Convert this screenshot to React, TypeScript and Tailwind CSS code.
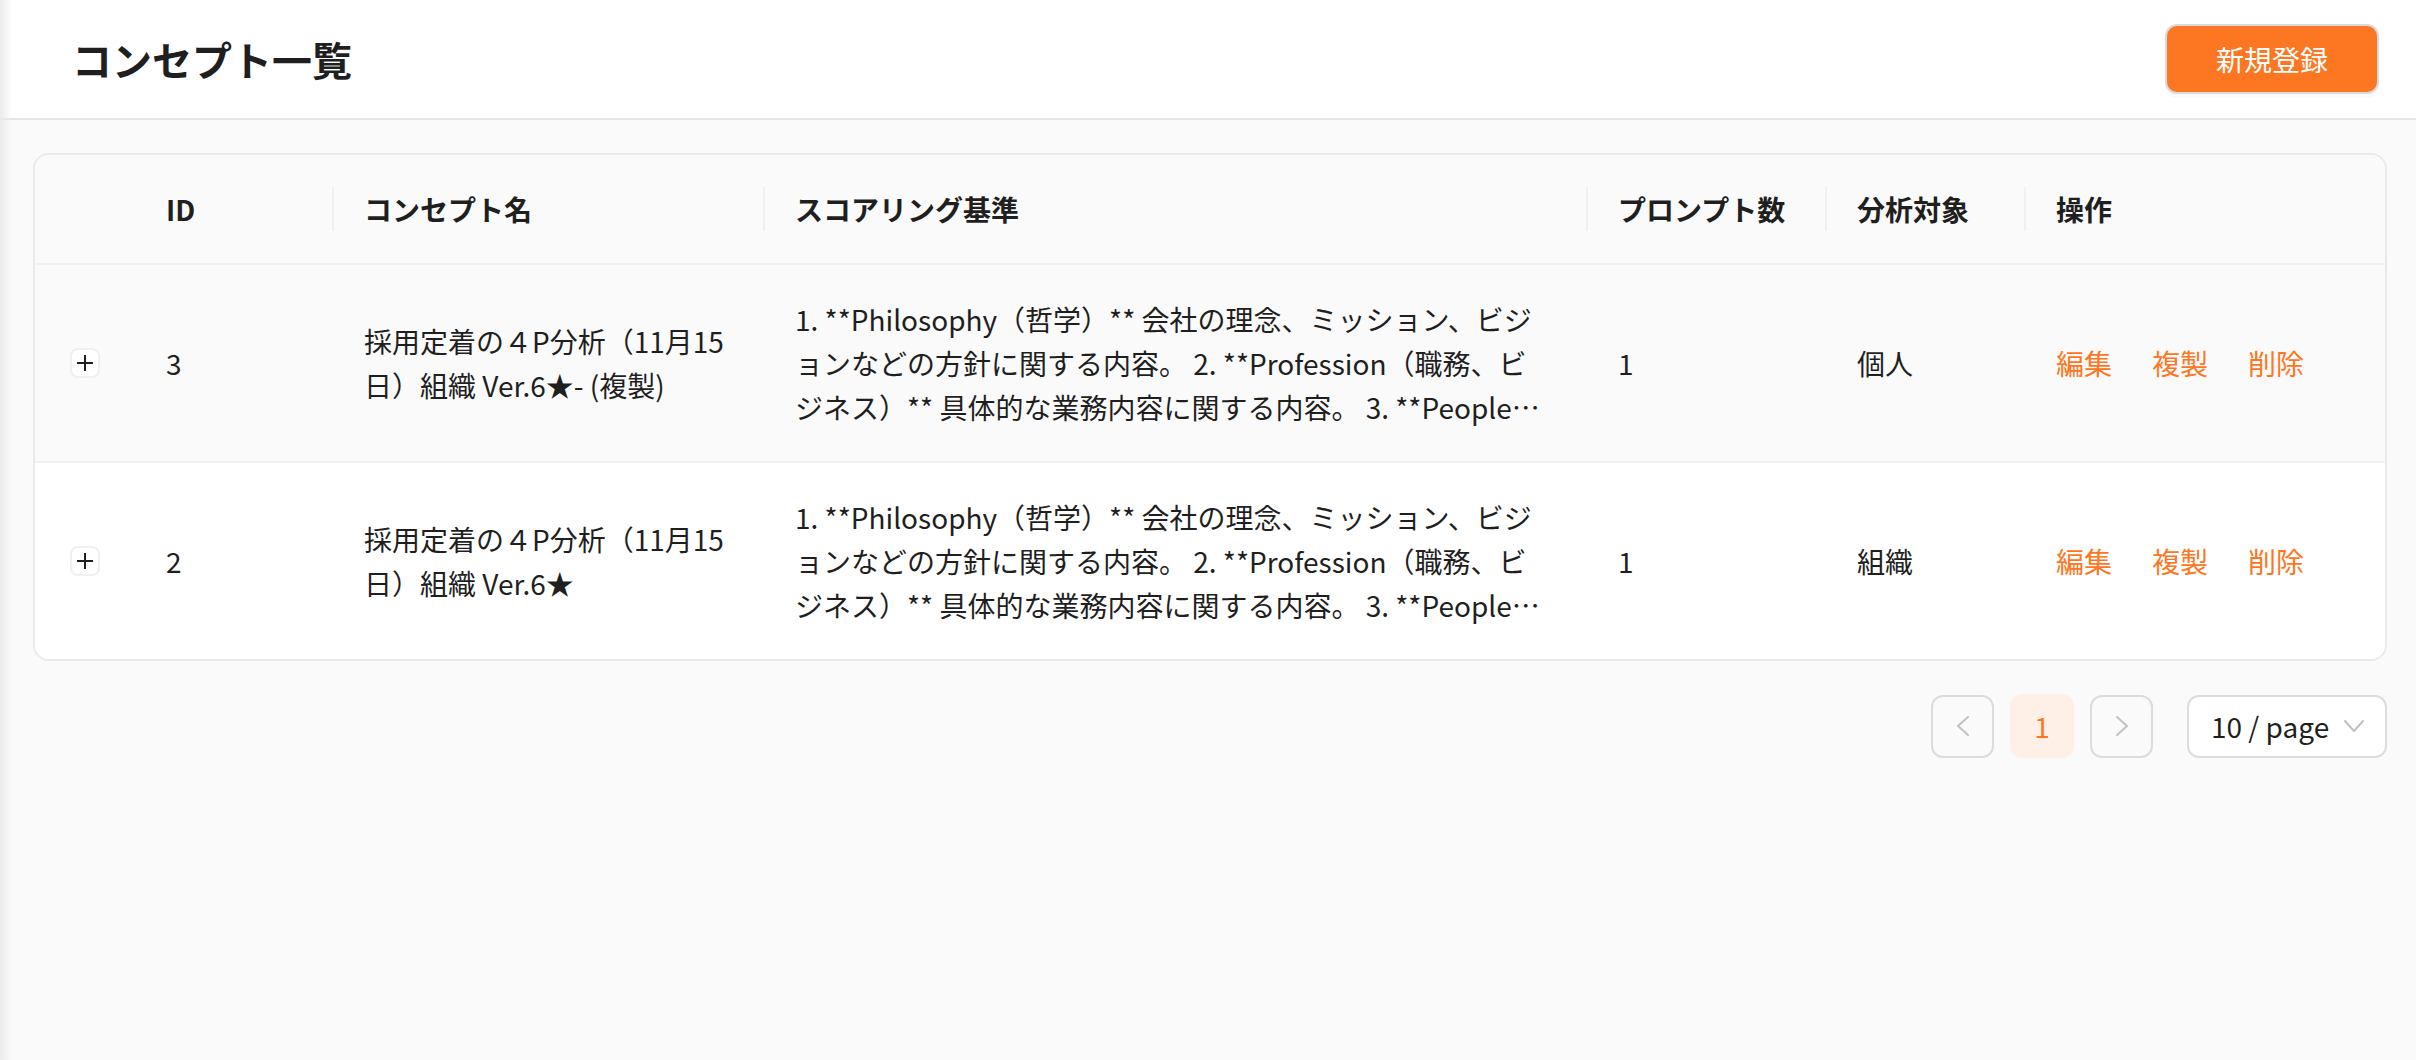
import { ReactNode } from "react";

type Concept = {
  id: number;
  name: string;
  criteria: string;
  prompts: number;
  target: string;
};

const criteriaText =
  "1. **Philosophy（哲学）** 会社の理念、ミッション、ビジョンなどの方針に関する内容。 2. **Profession（職務、ビジネス）** 具体的な業務内容に関する内容。 3. **People（人材・風土）** 一緒に働く人や組織風土に関する内容。 4. **Privilege（待遇）** 給与や福利厚生などの待遇に関する内容。";

const concepts: Concept[] = [
  { id: 3, name: "採用定着の４P分析（11月15日）組織 Ver.6★- (複製)", criteria: criteriaText, prompts: 1, target: "個人" },
  { id: 2, name: "採用定着の４P分析（11月15日）組織 Ver.6★", criteria: criteriaText, prompts: 1, target: "組織" },
];

const gridCols = "grid grid-cols-[99px_198px_431px_823px_239px_199px_1fr]";

function HeadCell({ children, divider = true }: { children: ReactNode; divider?: boolean }) {
  return (
    <div className="flex items-center py-8">
      <span className={divider ? "h-[44px] w-[2px] bg-[#f0f0f0]" : "h-[44px] w-[2px]"} />
      <span className="ml-[30px] text-[28px] font-semibold leading-[44px] text-[#1f1f1f]">{children}</span>
    </div>
  );
}

function Chevron({ dir }: { dir: "left" | "right" | "down" }) {
  const points = dir === "left" ? "13,2 3,11 13,20" : dir === "right" ? "3,2 13,11 3,20" : "2,3 11,13 20,3";
  return (
    <svg width={dir === "down" ? 22 : 16} height={dir === "down" ? 16 : 22} viewBox={dir === "down" ? "0 0 22 16" : "0 0 16 22"} fill="none">
      <polyline points={points} stroke="#c2c2c2" strokeWidth="2" strokeLinecap="round" strokeLinejoin="round" />
    </svg>
  );
}

export default function App() {
  return (
    <div className="relative min-h-screen bg-[#fafafa] font-['Noto_Sans_CJK_JP','Noto_Sans',sans-serif] text-[#1f1f1f]">
      <div className="pointer-events-none absolute inset-y-0 left-0 w-[12px] bg-gradient-to-r from-[#ebebeb] to-transparent" />

      <header className="flex h-[120px] items-center justify-between border-b-2 border-[#e6e6e6] bg-white pl-[72px] pr-[37px]">
        <h1 className="text-[40px] font-bold leading-none">コンセプト一覧</h1>
        <button className="h-[70px] w-[214px] rounded-[12px] border-2 border-[#dadada] bg-[#fd7622] text-[28px] text-white shadow-[0_4px_0_rgba(0,0,0,0.02)]">
          新規登録
        </button>
      </header>

      <main className="pl-[33px] pr-[29px] pt-[33px]">
        <div className="overflow-hidden rounded-[16px] border-2 border-[#eaeaee] bg-white">
          <div className={`${gridCols} border-b-2 border-[#f0f0f0] bg-[#fafafa]`}>
            <div />
            <HeadCell divider={false}>ID</HeadCell>
            <HeadCell>コンセプト名</HeadCell>
            <HeadCell>スコアリング基準</HeadCell>
            <HeadCell>プロンプト数</HeadCell>
            <HeadCell>分析対象</HeadCell>
            <HeadCell>操作</HeadCell>
          </div>

          {concepts.map((c, i) => (
            <div
              key={c.id}
              className={`${gridCols} items-center text-[28px] leading-[44px] ${i === 0 ? "bg-[#fafafa]" : "bg-white"} ${i < concepts.length - 1 ? "border-b-2 border-[#f0f0f0]" : ""}`}
            >
              <div className="flex justify-center">
                <button className="flex h-[30px] w-[30px] items-center justify-center rounded-[8px] border-2 border-[#f0f0f0] bg-white">
                  <svg width="18" height="18" viewBox="0 0 18 18">
                    <path d="M9 1v16M1 9h16" stroke="#1f1f1f" strokeWidth="2" />
                  </svg>
                </button>
              </div>
              <div className="px-8 py-8">{c.id}</div>
              <div className="px-8 py-8">{c.name}</div>
              <div className="px-8 py-8">
                <p className="line-clamp-3">{c.criteria}</p>
              </div>
              <div className="px-8 py-8">{c.prompts}</div>
              <div className="px-8 py-8">{c.target}</div>
              <div className="flex gap-[40px] px-8 py-8 text-[#fd7622]">
                <a>編集</a>
                <a>複製</a>
                <a>削除</a>
              </div>
            </div>
          ))}
        </div>

        <div className="mt-[33px] flex items-center justify-end">
          <button className="flex h-[63px] w-[63px] items-center justify-center rounded-[12px] border-2 border-[#dcdcdc]">
            <Chevron dir="left" />
          </button>
          <div className="ml-[16px] flex h-[64px] w-[64px] items-center justify-center rounded-[12px] bg-[#fff0e7] text-[28px] text-[#fd7622]">
            1
          </div>
          <button className="ml-[16px] flex h-[63px] w-[63px] items-center justify-center rounded-[12px] border-2 border-[#dcdcdc]">
            <Chevron dir="right" />
          </button>
          <div className="ml-[34px] flex h-[63px] w-[200px] items-center justify-between rounded-[12px] border-2 border-[#dcdcdc] bg-white pl-[22px] pr-[20px]">
            <span className="text-[28px]">10 / page</span>
            <Chevron dir="down" />
          </div>
        </div>
      </main>
    </div>
  );
}
